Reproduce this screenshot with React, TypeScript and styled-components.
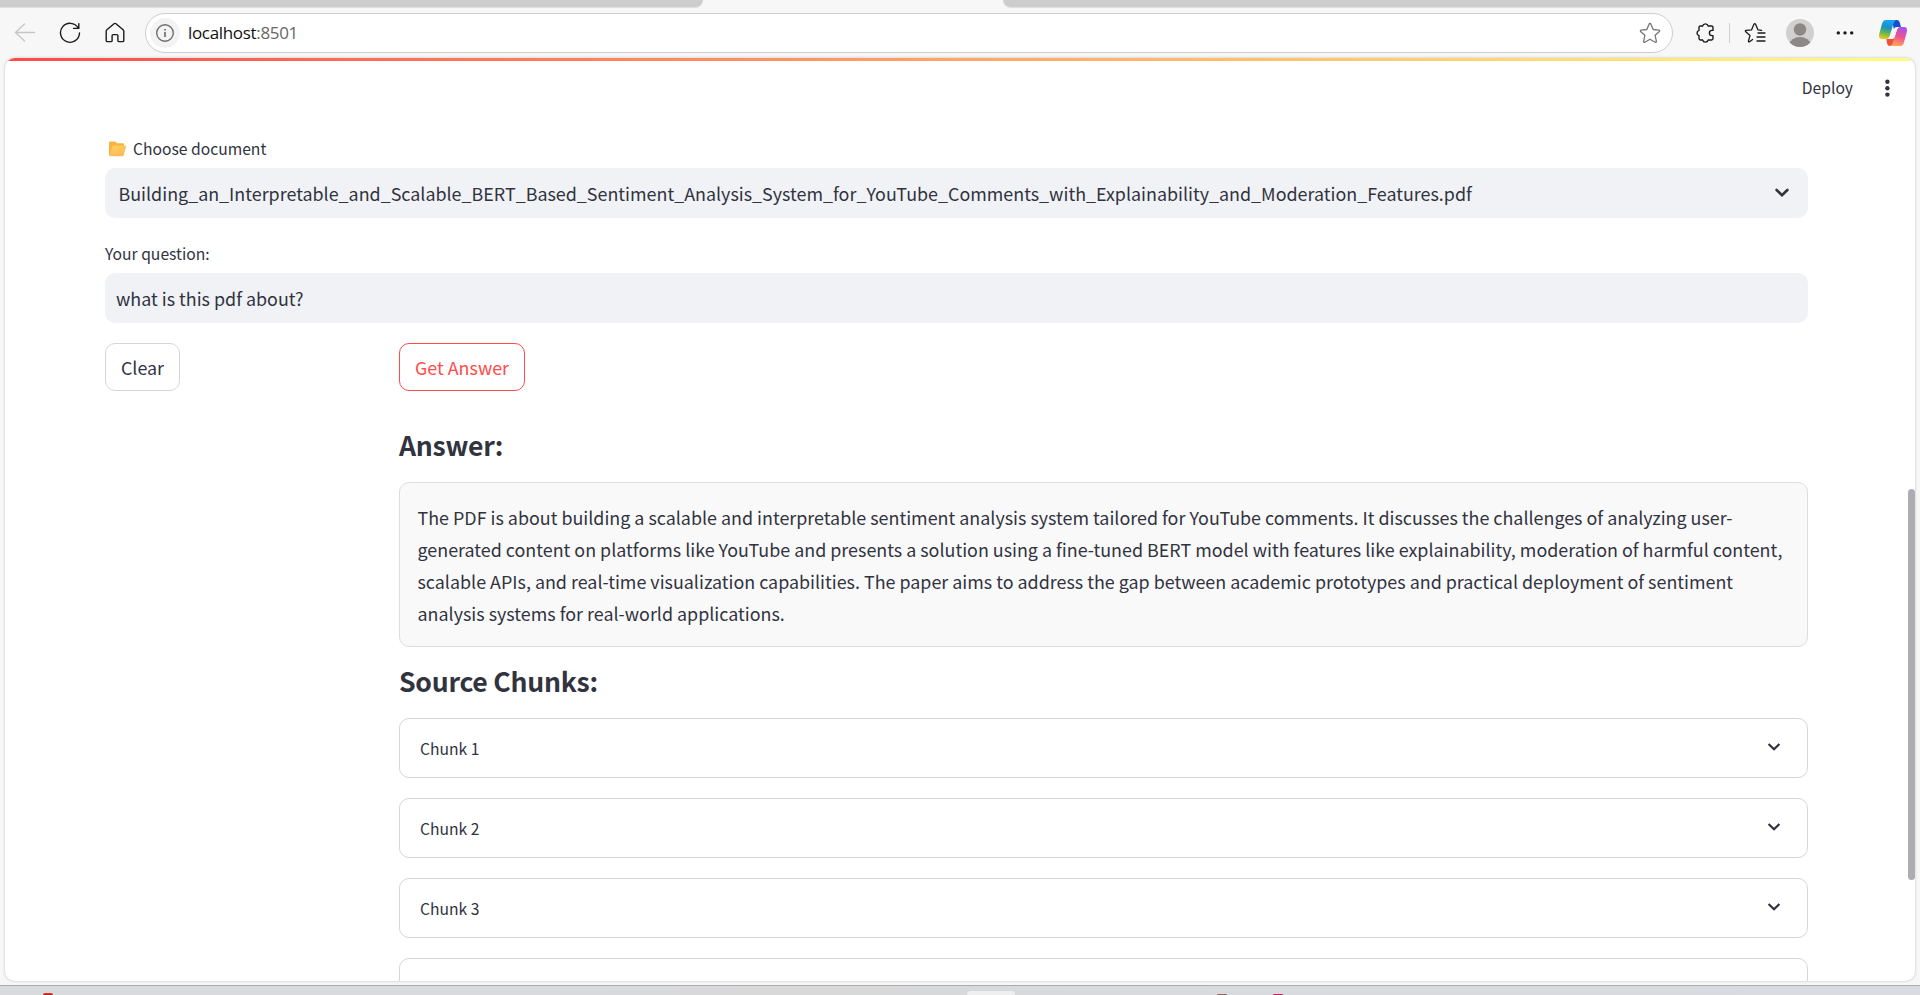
import React from 'react';
import styled, { createGlobalStyle, css } from 'styled-components';

const Global = createGlobalStyle`
  * { box-sizing: border-box; }
  html, body { margin: 0; height: 100%; overflow: hidden; }
  body { font-family: "Noto Sans CJK SC", "Noto Sans", sans-serif; color: #31333f; }
  h3, p { margin: 0; }
  svg { display: block; flex: none; }
`;

const Screen = styled.div`
  width: 1920px;
  height: 995px;
  display: flex;
  flex-direction: column;
  background: #f7f7f7;
  overflow: hidden;
`;

const TabStrip = styled.div`
  height: 8px;
  flex: none;
  display: flex;
  justify-content: space-between;
`;

const TabGap = styled.div<{ $side: 'left' | 'right' }>`
  width: ${p => (p.$side === 'left' ? 703 : 917)}px;
  background: #cdcdcd;
  border-bottom: 1px solid #e0e0e0;
  border-radius: ${p => (p.$side === 'left' ? '0 0 10px 0' : '0 0 0 10px')};
`;

const Toolbar = styled.div`
  height: 50px;
  flex: none;
  display: flex;
  align-items: center;
  padding: 0 12px 0 10px;
`;

const ToolIcon = styled.div<{ $ml?: number }>`
  width: 30px;
  flex: none;
  margin-left: ${p => p.$ml ?? 0}px;
  height: 30px;
  display: flex;
  align-items: center;
  justify-content: center;
`;

const AddressBar = styled.div`
  width: 1528px;
  flex: none;
  height: 40px;
  margin-left: 15px;
  display: flex;
  align-items: center;
  padding: 0 7px 0 4px;
  border: 1px solid #cecece;
  border-radius: 20px;
  background: #fff;
`;

const InfoBadge = styled.div`
  width: 30px;
  height: 30px;
  border-radius: 50%;
  background: #f3f3f3;
  display: flex;
  align-items: center;
  justify-content: center;
`;

const Url = styled.div`
  flex: 1;
  margin-left: 8px;
  padding-bottom: 1px;
  font-family: "Open Sans", sans-serif;
  font-size: 17px;
  line-height: 29px;
  letter-spacing: -0.33px;
  color: #111;
  span { color: #666; }
`;

const Separator = styled.div`
  width: 1px;
  height: 20px;
  margin-left: 9px;
  background: #cfcfcf;
`;

const Page = styled.main`
  position: relative;
  height: 923px;
  flex: none;
  margin: 0 5px;
  border-radius: 10px;
  background: #fff;
  box-shadow: 0 0 2px 1px #dedede;
  overflow: hidden;
`;

const Decoration = styled.div`
  height: 3px;
  background: linear-gradient(90deg, #ff4b4b, #fffd80);
`;

const Header = styled.header`
  height: 54px;
  display: flex;
  justify-content: flex-end;
  align-items: center;
  padding-right: 24px;
`;

const Deploy = styled.button`
  border: 0;
  padding: 0;
  margin-right: 30px;
  background: none;
  color: #31333f;
  font: 400 15.67px/24px "Noto Sans CJK SC", sans-serif;
`;

const Content = styled.div`
  width: 1703px;
  margin: 17px 0 0 100px;
  display: flex;
  flex-direction: column;
`;

const Label = styled.label`
  height: 36px;
  padding-bottom: 2px;
  display: flex;
  align-items: center;
  font-size: 15.67px;
  line-height: 24px;
`;

const FolderSlot = styled.span`
  margin: 0 6px 0 4px;
`;

const field = css`
  height: 50px;
  border-radius: 10px;
  background: #f0f2f6;
  display: flex;
  align-items: center;
  font-size: 17.905px;
  line-height: 30px;
`;

const Select = styled.div`
  ${field}
  justify-content: space-between;
  padding: 0 19px 0 13.5px;
  margin-bottom: 19px;
`;

const TextField = styled.div`
  ${field}
  padding: 0 11px;
  margin-bottom: 20px;
`;

const Columns = styled.div`
  display: grid;
  grid-template-columns: 274px 1409px;
  column-gap: 20px;
  align-items: start;
`;

const Results = styled.div`
  display: flex;
  flex-direction: column;
`;

const Button = styled.button<{ $active?: boolean }>`
  height: 48px;
  width: ${p => (p.$active ? 126 : 75)}px;
  margin-bottom: ${p => (p.$active ? 36 : 0)}px;
  padding: 0;
  border: 1px solid ${p => (p.$active ? '#ff4b4b' : '#d6d6d8')};
  border-radius: 10px;
  background: #fff;
  color: ${p => (p.$active ? '#ff4b4b' : '#31333f')};
  font: 400 17.905px/30px "Noto Sans CJK SC", sans-serif;
`;

const Heading = styled.h3`
  height: 37px;
  font-size: 26.6px;
  line-height: 36px;
  font-weight: 700;
  letter-spacing: -0.26px;
`;

const AnswerBox = styled.div`
  height: 165px;
  margin: 18px 0 16px;
  padding: 18px 17.5px;
  border: 1px solid #dddddf;
  border-radius: 10px;
  background: #f9f9f9;
  font-size: 17.905px;
  line-height: 32px;
  white-space: nowrap;
`;

const ChunkList = styled.div`
  display: flex;
  flex-direction: column;
  gap: 20px;
  margin-top: 18px;
`;

const Chunk = styled.div`
  height: 60px;
  display: flex;
  align-items: center;
  justify-content: space-between;
  padding: 0 26px 0 20px;
  border: 1px solid #d6d6d8;
  border-radius: 10px;
  font-size: 15.67px;
  line-height: 24px;
  span { padding-top: 1px; }
  svg { margin-bottom: 2px; }
`;

const ScrollThumb = styled.div`
  position: absolute;
  right: 0;
  top: 431px;
  width: 7px;
  height: 391px;
  border-radius: 4px;
  background: #adacb1;
`;

const Taskbar = styled.div`
  height: 10px;
  margin-top: 4px;
  flex: none;
  display: flex;
  align-items: flex-end;
  border-top: 1px solid #acacae;
  background: linear-gradient(90deg, #d9dade 0%, #d9dade 28%, #d8d8d8 42%, #d8dade 60%, #dadbe0 100%);
  overflow: hidden;
`;

const ActiveApp = styled.div`
  width: 48px;
  height: 4px;
  margin-left: 914px;
  border-radius: 4px 4px 0 0;
  background: #efefef;
`;

const AppTip = styled.div<{ $ml: number; $color: string; $h?: number }>`
  width: 10px;
  height: ${p => p.$h ?? 1}px;
  margin-left: ${p => p.$ml}px;
  border-radius: 5px 5px 0 0;
  background: ${p => p.$color};
`;

const Star = ({ color, list }: { color: string; list?: boolean }) => (
  <svg width="22" height="22" viewBox="0 0 22 22" fill="none" stroke={color} strokeWidth="1.3" strokeLinejoin="round" strokeLinecap="round">
    {list ? (
      <path d="M8.6 17.4L5.6 19.7Q4.2 20.3 4.5 18.8L6 13.6L1.5 9.5Q1 8.6 2 8.4L7.6 7.8L10 2.1Q10.8 1 11.5 2.1L13.9 7.8L17.6 8.3M14 11H21M13 15H21M13 19H21" />
    ) : (
      <path d="M11 1.3Q11.5 1.3 11.8 1.9L14.2 7.5L20 8.2Q21 8.6 20.4 9.4L16.1 13.3L17.4 19.4Q17.3 20.7 16.2 20.2L11 17.2L5.8 20.2Q4.7 20.7 4.6 19.4L5.9 13.3L1.6 9.4Q1 8.6 2 8.2L7.8 7.5L10.2 1.9Q10.5 1.3 11 1.3Z" />
    )}
  </svg>
);

const Chevron = ({ round }: { round?: boolean }) => (
  <svg width="14" height="10" viewBox="0 0 14 10" fill="none" stroke="#31333f" strokeWidth={round ? 2.6 : 2.2} strokeLinecap={round ? 'round' : 'butt'}>
    <path d="M1.6 2L7 7.2L12.4 2" />
  </svg>
);

const Folder = () => (
  <svg width="18" height="16" viewBox="0 0 18 16">
    <defs>
      <linearGradient id="flap" x1="0" y1="0" x2="0.5" y2="1">
        <stop offset="0" stopColor="#ffd35a" />
        <stop offset="1" stopColor="#fdb95c" />
      </linearGradient>
    </defs>
    <path d="M0 1.5Q0 .5 1 .5H6.2L8 2.2H14Q15 2.2 15 3.3V14H1Q0 14 0 15Z" fill="#f9b343" />
    <path d="M4.6 4.5H16.2Q17.5 4.5 17.1 5.8L14.7 14Q14.4 15.2 13.3 15.2H.6L3.2 5.6Q3.6 4.5 4.6 4.5Z" fill="url(#flap)" />
  </svg>
);

const Copilot = () => (
  <svg width="30" height="28" viewBox="0 0 30 28">
    <defs>
      <linearGradient id="cpLeft" x1="0.4" y1="0" x2="0.2" y2="1">
        <stop offset="0" stopColor="#1ba5f2" />
        <stop offset="0.35" stopColor="#1c8fc9" />
        <stop offset="0.62" stopColor="#56b35c" />
        <stop offset="1" stopColor="#f7cb12" />
      </linearGradient>
      <linearGradient id="cpRight" x1="0.7" y1="0" x2="0.4" y2="1">
        <stop offset="0" stopColor="#a750f0" />
        <stop offset="0.5" stopColor="#ee5290" />
        <stop offset="1" stopColor="#ffa457" />
      </linearGradient>
    </defs>
    <path d="M14 1H19Q21 1 21.8 3.4L23 8H19Q16.6 8 15.8 10Z" fill="#1650cf" />
    <path d="M8.5 20H14.5L17 18L15.2 24Q14.2 27 12 27Q9.7 27 9 24.4Z" fill="#ee5138" />
    <path d="M8 1H18.2Q16.3 1.6 15.3 5L11.8 16.5Q10.8 20 8 20H4Q.2 20 1.2 15L4 4.8Q5 1 8 1Z" fill="url(#cpLeft)" />
    <path d="M22 27H12.2Q14.2 26.3 15.2 23L18.7 11.5Q19.7 8 22.5 8H26Q29.8 8 28.8 13L26 23.2Q25 27 22 27Z" fill="url(#cpRight)" />
    <path d="M19.8 8.2Q17 8 16 10.6L13.6 17.6Q12.9 19.6 11 19.9H14.2Q16 19.7 16.6 18L18.7 11.2Q19.2 9.4 20.6 8.4Z" fill="#f7f7f7" />
  </svg>
);

const chunks = ['Chunk 1', 'Chunk 2', 'Chunk 3', ''];

const answerLines = [
  'The PDF is about building a scalable and interpretable sentiment analysis system tailored for YouTube comments. It discusses the challenges of analyzing user-',
  'generated content on platforms like YouTube and presents a solution using a fine-tuned BERT model with features like explainability, moderation of harmful content,',
  'scalable APIs, and real-time visualization capabilities. The paper aims to address the gap between academic prototypes and practical deployment of sentiment',
  'analysis systems for real-world applications.',
];

export default function App() {
  return (
    <Screen>
      <Global />
      <TabStrip>
        <TabGap $side="left" />
        <TabGap $side="right" />
      </TabStrip>
      <Toolbar>
        <ToolIcon>
          <svg width="22" height="20" viewBox="0 0 22 20" fill="none" stroke="#c6c6c6" strokeWidth="1.3" strokeLinecap="round">
            <path d="M10.5 1L1.5 9.5L10.5 18M1.5 9.5H20.5" />
          </svg>
        </ToolIcon>
        <ToolIcon $ml={15}>
          <svg width="22" height="22" viewBox="0 0 22 22" fill="none" stroke="#1b1b1b" strokeWidth="1.4" strokeLinecap="round" strokeLinejoin="round">
            <path d="M19.2 6A9.5 9.5 0 1 0 20.5 11M19.8 1.6V6.4H14.6" />
          </svg>
        </ToolIcon>
        <ToolIcon $ml={15}>
          <svg width="20" height="22" viewBox="0 0 20 22" fill="none" stroke="#1b1b1b" strokeWidth="1.4" strokeLinejoin="round">
            <path d="M1.2 9.2Q1.2 8.4 1.9 7.8L9 1.7Q10 1 11 1.7L18.1 7.8Q18.8 8.4 18.8 9.2V18.4Q18.8 19.6 17.6 19.6H14Q12.9 19.6 12.9 18.4V13.8Q12.9 12.6 11.7 12.6H8.3Q7.1 12.6 7.1 13.8V18.4Q7.1 19.6 6 19.6H2.4Q1.2 19.6 1.2 18.4Z" />
          </svg>
        </ToolIcon>
        <AddressBar>
          <InfoBadge>
            <svg width="20" height="20" viewBox="0 0 20 20" fill="none" stroke="#6e6e6e" strokeWidth="1.4">
              <circle cx="10" cy="10" r="8.3" />
              <path d="M10 9V14M10 6V7.6" strokeWidth="1.7" />
            </svg>
          </InfoBadge>
          <Url>localhost<span>:8501</span></Url>
          <ToolIcon>
            <Star color="#767676" />
          </ToolIcon>
        </AddressBar>
        <ToolIcon $ml={17}>
          <svg width="20" height="22" viewBox="0 0 20 22" fill="none" stroke="#1b1b1b" strokeWidth="1.4" strokeLinejoin="round">
            <path d="M5.4 4H7.6A2.9 2.9 0 0 1 13.2 4H16.6Q18 4 18 5.4V8.4H17A2.6 2.6 0 0 0 17 13.6H18V16.6Q18 18 16.6 18H13.2A2.9 2.9 0 0 1 7.6 18H5.4Q4 18 4 16.6V13.6A2.7 2.7 0 0 1 4 8.4V5.4Q4 4 5.4 4Z" />
          </svg>
        </ToolIcon>
        <Separator />
        <ToolIcon $ml={10}>
          <Star color="#1b1b1b" list />
        </ToolIcon>
        <ToolIcon $ml={15}>
          <svg width="28" height="28" viewBox="0 0 28 28">
            <clipPath id="face"><circle cx="14" cy="14" r="14" /></clipPath>
            <g clipPath="url(#face)">
              <rect width="28" height="28" fill="#d2d0ce" />
              <circle cx="14" cy="10.5" r="6.2" fill="#8b8886" />
              <ellipse cx="14" cy="25.5" rx="10.5" ry="7.5" fill="#8b8886" />
            </g>
          </svg>
        </ToolIcon>
        <ToolIcon $ml={15}>
          <svg width="20" height="6" viewBox="0 0 20 6" fill="#1b1b1b">
            <circle cx="3.3" cy="2.9" r="1.7" /><circle cx="10" cy="2.9" r="1.7" /><circle cx="16.7" cy="2.9" r="1.7" />
          </svg>
        </ToolIcon>
        <ToolIcon $ml={18}>
          <Copilot />
        </ToolIcon>
      </Toolbar>

      <Page>
        <Decoration />
        <Header>
          <Deploy>Deploy</Deploy>
          <svg width="8" height="20" viewBox="0 0 8 20" fill="#31333f">
            <circle cx="4.4" cy="3.8" r="2.2" /><circle cx="4.4" cy="10.2" r="2.2" /><circle cx="4.4" cy="16.6" r="2.2" />
          </svg>
        </Header>
        <Content>
          <Label><FolderSlot><Folder /></FolderSlot>Choose document</Label>
          <Select>
            <span>Building_an_Interpretable_and_Scalable_BERT_Based_Sentiment_Analysis_System_for_YouTube_Comments_with_Explainability_and_Moderation_Features.pdf</span>
            <Chevron round />
          </Select>
          <Label>Your question:</Label>
          <TextField>what is this pdf about?</TextField>
          <Columns>
            <Button>Clear</Button>
            <Results>
              <Button $active>Get Answer</Button>
              <Heading>Answer:</Heading>
              <AnswerBox>
                {answerLines.map(line => <p key={line}>{line}</p>)}
              </AnswerBox>
              <Heading>Source Chunks:</Heading>
              <ChunkList>
                {chunks.map((name, i) => (
                  <Chunk key={i}><span>{name}</span><Chevron /></Chunk>
                ))}
              </ChunkList>
            </Results>
          </Columns>
        </Content>
        <ScrollThumb />
      </Page>

      <Taskbar>
        <AppTip $ml={43} $color="#cc2d22" $h={2} />
        <ActiveApp />
        <AppTip $ml={202} $color="#8a6a5c" />
        <AppTip $ml={46} $color="#c0245e" />
      </Taskbar>
    </Screen>
  );
}
